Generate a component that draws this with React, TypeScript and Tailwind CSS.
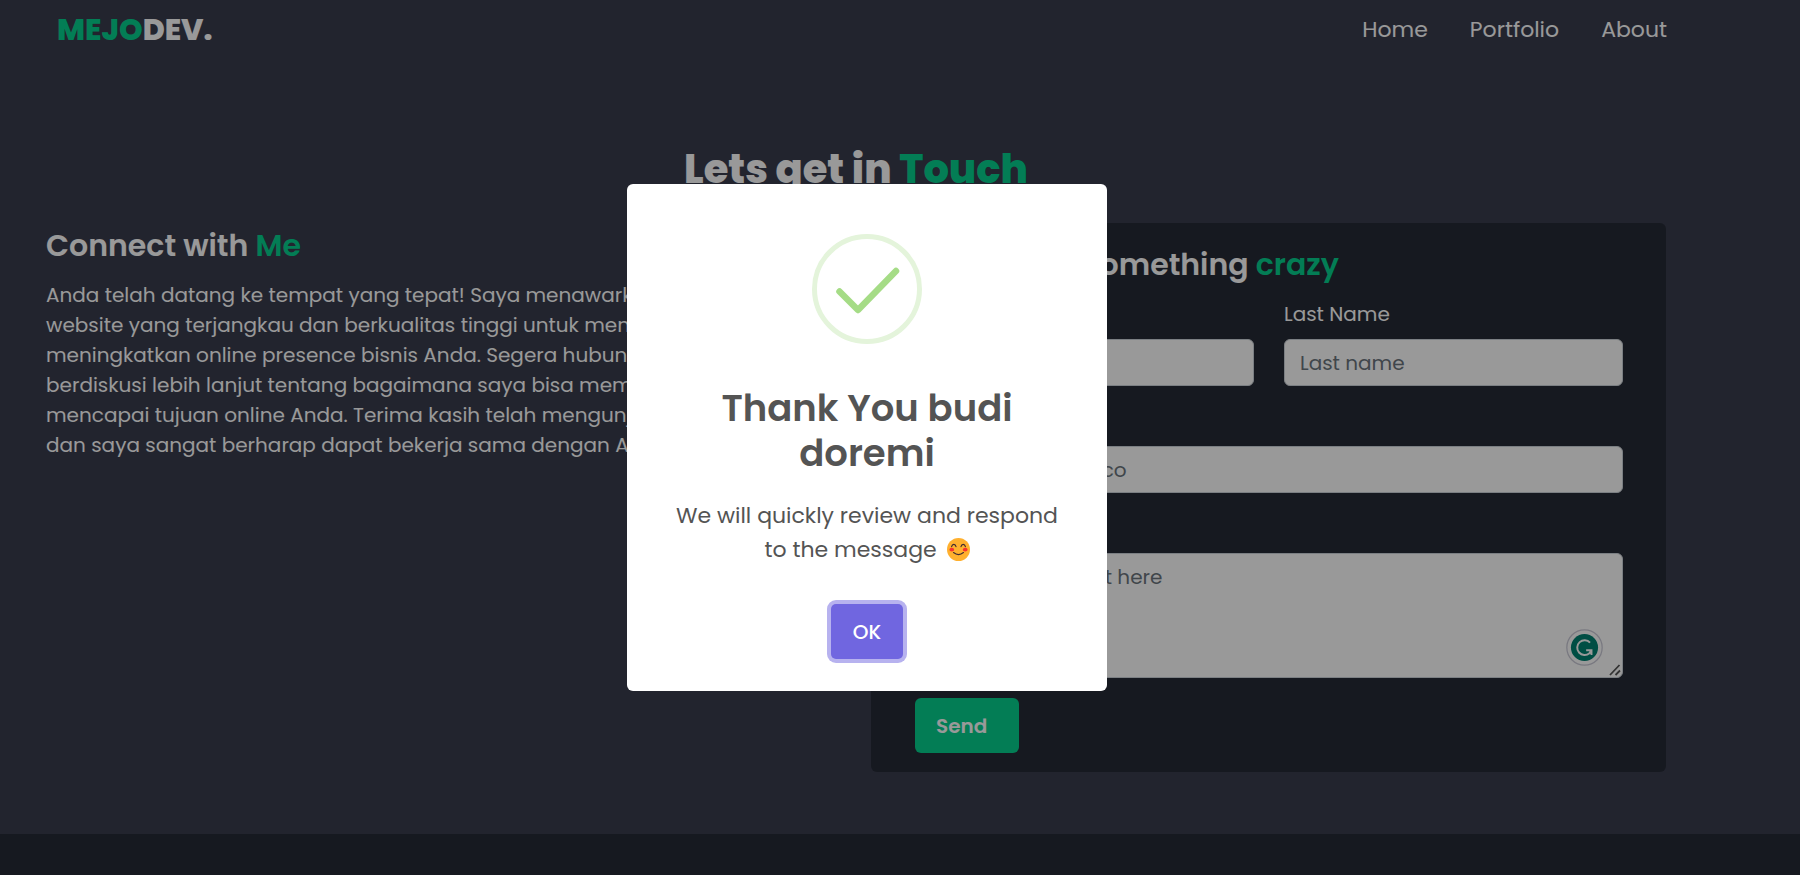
import type { ReactNode } from "react";

const navLinks = ["Home", "Portfolio", "About"];

const introLines = [
  "Anda telah datang ke tempat yang tepat! Saya menawarkan jasa",
  "website yang terjangkau dan berkualitas tinggi untuk membantu",
  "meningkatkan online presence bisnis Anda. Segera hubungi saya",
  "berdiskusi lebih lanjut tentang bagaimana saya bisa membantu",
  "mencapai tujuan online Anda. Terima kasih telah mengunjungi",
  "dan saya sangat berharap dapat bekerja sama dengan Anda.",
];

const fieldClass =
  "block w-full rounded-md border border-[#ced4da] bg-white px-[15px] text-[20px] leading-[30px] text-[#212529] placeholder:text-[#6c757d] placeholder:opacity-100";

function Accent({ children }: { children: ReactNode }) {
  return <span className="text-[#05d08e]">{children}</span>;
}

function Header() {
  return (
    <header className="flex items-center justify-between pt-[7px] pr-[133px] pl-[57px]">
      <a href="#" className="text-[30px] leading-[46px] font-extrabold">
        <Accent>MEJO</Accent>DEV.
      </a>
      <nav className="flex gap-[42px] text-[22px] leading-[46px]">
        {navLinks.map((label) => (
          <a key={label} href={`#${label.toLowerCase()}`}>
            {label}
          </a>
        ))}
      </nav>
    </header>
  );
}

function Intro() {
  return (
    <section className="min-w-0 flex-1 pt-[5px]">
      <h2 className="text-[30px] leading-[36px] font-semibold">
        Connect with <Accent>Me</Accent>
      </h2>
      <p className="mt-[16px] text-[20px] leading-[30px]">
        {introLines.map((line) => (
          <span key={line} className="block whitespace-nowrap">
            {line}
          </span>
        ))}
      </p>
    </section>
  );
}

function Field({ id, label, children }: { id: string; label: string; children: ReactNode }) {
  return (
    <div className="min-w-0 flex-1">
      <label htmlFor={id} className="mb-[10px] block text-[20px] leading-[30px]">
        {label}
      </label>
      {children}
    </div>
  );
}

function AssistantBadge() {
  return (
    <svg viewBox="0 0 36 36" className="absolute right-[20px] bottom-[12px] size-[37px]" aria-hidden="true">
      <circle cx="18" cy="18" r="17.2" fill="#fff" stroke="#c9c9d6" strokeWidth="1.2" />
      <circle cx="18" cy="18" r="13.2" fill="#008272" />
      <path
        d="M23.4 13.2A7.2 7.2 0 1 0 22.8 23.6L24.6 20.8M19.6 20.6H24.8V25.4"
        fill="none"
        stroke="#fff"
        strokeWidth="1.9"
      />
    </svg>
  );
}

function ResizeGrip() {
  return (
    <svg viewBox="0 0 12 12" className="pointer-events-none absolute right-[2px] bottom-[2px] size-[12px]" aria-hidden="true">
      <path d="M1 11L10.5 1M6.5 11L11 6.5" fill="none" stroke="#555" strokeWidth="1.8" />
    </svg>
  );
}

function ContactForm() {
  return (
    <form
      className="w-[795px] shrink-0 rounded-md bg-[#262b36] pt-[24px] pr-[43px] pb-[19px] pl-[44px]"
      onSubmit={(event) => event.preventDefault()}
    >
      <h2 className="mb-[16px] text-[30px] leading-[36px] font-semibold">
        Let&apos;s make something <Accent>crazy</Accent>
      </h2>
      <div className="mb-[20px] flex gap-[30px]">
        <Field id="first-name" label="First Name">
          <input id="first-name" type="text" placeholder="First name" className={`${fieldClass} h-[47px]`} />
        </Field>
        <Field id="last-name" label="Last Name">
          <input id="last-name" type="text" placeholder="Last name" className={`${fieldClass} h-[47px]`} />
        </Field>
      </div>
      <div className="mb-[20px] flex">
        <Field id="email" label="Email">
          <input id="email" type="email" placeholder="name@example.co" className={`${fieldClass} h-[47px]`} />
        </Field>
      </div>
      <div className="mb-[20px] flex">
        <Field id="message" label="Message">
          <div className="relative">
            <textarea
              id="message"
              placeholder="Leave a comment here"
              className={`${fieldClass} h-[125px] resize-none py-[8px]`}
            />
            <AssistantBadge />
            <ResizeGrip />
          </div>
        </Field>
      </div>
      <button
        type="submit"
        className="h-[55px] w-[104px] rounded-md bg-[#05d08e] pl-[21px] text-left text-[20px] leading-[30px] font-semibold"
      >
        Send
      </button>
    </form>
  );
}

function SuccessIcon() {
  return (
    <svg viewBox="0 0 110 110" className="mx-auto size-[110px]" aria-hidden="true">
      <circle cx="55" cy="55" r="52.5" fill="none" stroke="#e4f4db" strokeWidth="5" />
      <path
        d="M27.5 57.5L46 76L84 37"
        fill="none"
        stroke="#a5dc86"
        strokeWidth="6.5"
        strokeLinecap="round"
        strokeLinejoin="round"
      />
    </svg>
  );
}

function SmileEmoji() {
  return (
    <svg viewBox="0 0 24 24" className="ml-[4px] inline-block size-[23px] align-[-4px]" role="img" aria-label="😊">
      <circle cx="12" cy="12" r="12" fill="#ffb02e" />
      <ellipse cx="5" cy="12.2" rx="2.5" ry="1.9" fill="#f8312f" />
      <ellipse cx="19" cy="12.2" rx="2.5" ry="1.9" fill="#f8312f" />
      <path
        d="M4.8 9C5.500 5.800 8.700 5.800 9.400 9M14.600 9C15.300 5.800 18.500 5.800 19.200 9M6.800 15.200Q12 19.400 17.200 15.200"
        fill="none"
        stroke="#402a32"
        strokeWidth="1.2"
        strokeLinecap="round"
      />
    </svg>
  );
}

function SuccessDialog() {
  return (
    <div className="fixed inset-0 flex items-center justify-center bg-black/40 pr-[66px]">
      <div
        role="dialog"
        aria-modal="true"
        aria-labelledby="dialog-title"
        className="w-[480px] rounded-md bg-white pt-[50px] pb-[32px] text-center text-[#545454]"
      >
        <SuccessIcon />
        <h2 id="dialog-title" className="mx-auto mt-[42px] w-[400px] text-[37px] leading-[45px] font-semibold">
          Thank You budi doremi
        </h2>
        <p className="mx-auto mt-[23px] w-[420px] text-[22px] leading-[34px]">
          We will quickly review and respond
          <br />
          to the message <SmileEmoji />
        </p>
        <button
          type="button"
          className="mt-[37px] h-[55px] w-[72px] rounded-[5px] bg-[#7066e0] text-[20px] leading-[30px] font-medium text-white ring-4 ring-[#b7b2ef]"
        >
          OK
        </button>
      </div>
    </div>
  );
}

export default function App() {
  return (
    <div className="flex min-h-screen flex-col bg-[#393c4e] font-[Poppins,Inter,sans-serif] text-white">
      <Header />
      <main className="pr-[134px] pb-[62px] pl-[46px]">
        <h1 className="mt-[86px] mb-[24px] px-[44px] text-center text-[40px] leading-[60px] font-extrabold">
          Lets get in <Accent>Touch</Accent>
        </h1>
        <div className="flex items-start gap-[30px]">
          <Intro />
          <ContactForm />
        </div>
      </main>
      <footer className="flex-1 bg-[#262b36]" />
      <SuccessDialog />
    </div>
  );
}
